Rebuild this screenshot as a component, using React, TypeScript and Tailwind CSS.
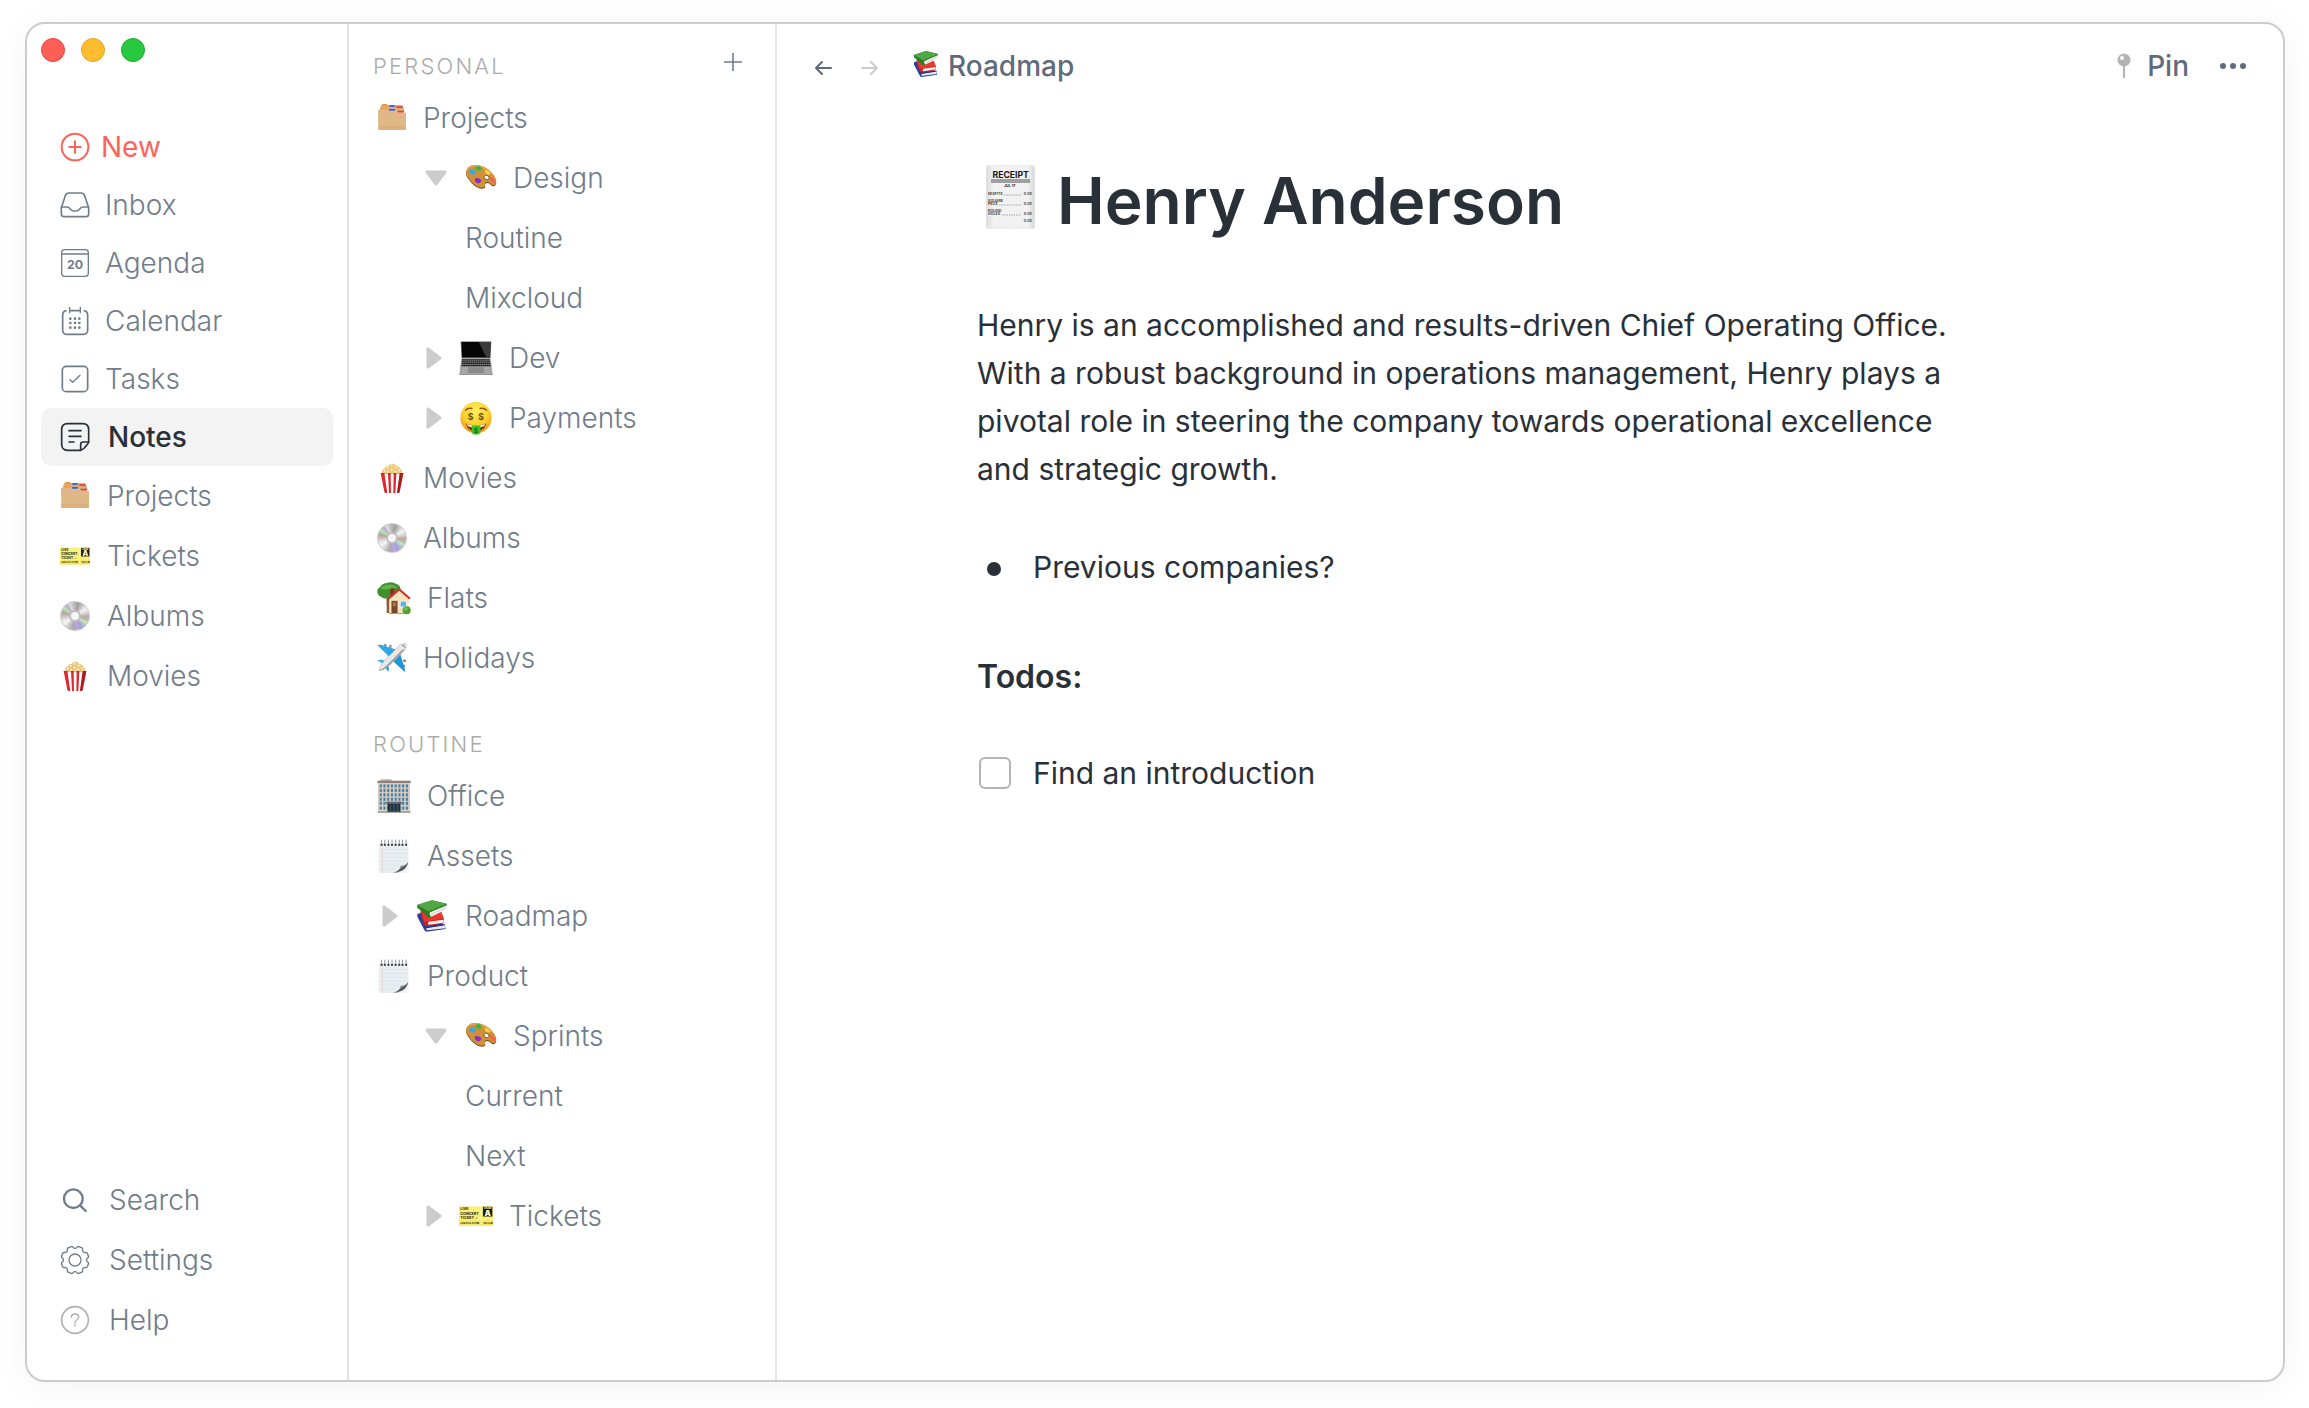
import type { ReactNode } from "react";

/* ---------- line icons ---------- */

function LineIcon({ children, className = "w-[30px] h-[30px]", sw = 5 }: { children: ReactNode; className?: string; sw?: number }) {
  return (
    <svg viewBox="0 0 90 90" className={`shrink-0 ${className}`} fill="none" stroke="currentColor" strokeWidth={sw} strokeLinecap="round" strokeLinejoin="round" aria-hidden="true">
      {children}
    </svg>
  );
}

const NewIcon = () => (
  <LineIcon sw={6}>
    <circle cx="45" cy="45" r="40" />
    <path d="M28 45H62M45 28V62" />
  </LineIcon>
);
const InboxIcon = () => (
  <LineIcon>
    <path d="M4 53L16 17Q19 9 27 9H63Q71 9 74 17L86 53V71Q86 80 77 80H13Q4 80 4 71Z" />
    <path d="M4 51H20Q27 51 30 56Q34 63 41 63H49Q56 63 60 56Q63 51 70 51H86" />
  </LineIcon>
);
const AgendaIcon = () => (
  <LineIcon sw={4}>
    <rect x="5" y="5" width="80" height="80" rx="9" />
    <path d="M5 18H85" />
    <text x="45" y="64" textAnchor="middle" fontSize="37" fontWeight="700" fill="currentColor" stroke="none" fontFamily="Inter, sans-serif">20</text>
  </LineIcon>
);
const CalendarIcon = () => (
  <LineIcon>
    <path d="M20 14Q8 15 8 28V72Q8 85 20 85H70Q83 85 83 72V28Q83 15 71 14M29 14H61" strokeLinecap="butt" />
    <path d="M29 4V20M61 4V20" strokeWidth="4" />
    {[38, 51, 65].map((y) =>
      [31, 45, 58].map((x) => <circle key={`${x}-${y}`} cx={x} cy={y} r="4" fill="currentColor" stroke="none" />)
    )}
  </LineIcon>
);
const TasksIcon = () => (
  <LineIcon>
    <rect x="7" y="7" width="76" height="76" rx="12" />
    <path d="M30 47L38 55L60 34" strokeWidth="4" />
  </LineIcon>
);
const NotesIcon = () => (
  <LineIcon>
    <path d="M61 85H23Q5 85 5 67V23Q5 5 23 5H68Q86 5 86 23V60Q84 66 79 71L73 78Q68 83 61 85Z" />
    <path d="M62 84V67Q62 60 69 60H86M27 26H63M27 43H63M27 60H42" />
  </LineIcon>
);
const SearchIcon = () => (
  <LineIcon sw={7}>
    <circle cx="40" cy="41" r="28" />
    <path d="M60 61L77 78" />
  </LineIcon>
);

const gearPath = (() => {
  const p = (deg: number, r: number) => {
    const a = (deg * Math.PI) / 180;
    return `${(45 + r * Math.sin(a)).toFixed(1)} ${(45 - r * Math.cos(a)).toFixed(1)}`;
  };
  let d = `M${p(0, 35)}`;
  for (let i = 0; i < 8; i++) {
    const a = i * 45;
    d += `Q${p(a + 8, 35)} ${p(a + 9, 39)}Q${p(a + 11, 42)} ${p(a + 16, 42)}L${p(a + 29, 42)}Q${p(a + 34, 42)} ${p(a + 36, 39)}Q${p(a + 37, 35)} ${p(a + 45, 35)}`;
  }
  return d + "Z";
})();
const SettingsIcon = () => (
  <LineIcon sw={4}>
    <path d={gearPath} />
    <circle cx="45" cy="45" r="18" />
  </LineIcon>
);
const HelpIcon = () => (
  <LineIcon className="w-[30px] h-[30px] text-[#b0b0b0]">
    <circle cx="45" cy="45" r="40" />
    <path d="M34 37Q34 27 45 27Q56 27 56 36Q56 42 50 45Q45 48 45 54" strokeWidth="4" />
    <circle cx="45" cy="61" r="3" fill="currentColor" stroke="none" />
  </LineIcon>
);

/* ---------- pictograms ---------- */

function Pic({ vb, className, children }: { vb: string; className: string; children: ReactNode }) {
  return (
    <svg viewBox={vb} className={`shrink-0 ${className}`} aria-hidden="true">
      {children}
    </svg>
  );
}

const Folders = () => (
  <Pic vb="-3 -3 90 90" className="w-[30px] h-[30px]">
    <path d="M4 22L10 4H72L80 22Z" fill="#c9985c" />
    <rect x="12" y="0" width="16" height="6" rx="2" fill="#f6923c" />
    <rect x="34" y="3" width="16" height="5" rx="1" fill="#3d5afe" />
    <rect x="56" y="7" width="19" height="5" rx="1" fill="#ef4444" />
    <path d="M8 7H32V10H54V13H78V22H6Z" fill="#d9b07d" />
    <rect x="9" y="11" width="19" height="6" rx="1" fill="#f39a4b" />
    <rect x="33" y="15" width="18" height="5" rx="1" fill="#3d5afe" />
    <rect x="58" y="20" width="20" height="6" rx="1" fill="#ef3b3b" />
    <path d="M0 20Q0 17 3 17H30L34 22H56L60 26H84V74Q84 78 80 78H4Q1 78 1 74Z" fill="#e0b887" />
    <path d="M1 66H84V74Q84 78 80 78H4Q1 78 1 74Z" fill="#dcb07b" />
  </Pic>
);

const Ticket = ({ className = "w-[30px] h-[30px]" }: { className?: string }) => (
  <Pic vb="0 -22 101 101" className={className}>
    <rect x="0" y="0" width="101" height="57" fill="#f9f07a" />
    <rect x="0" y="42" width="101" height="15" fill="#f5e766" />
    <path d="M66 0V57" stroke="#fffbd0" strokeWidth="3" strokeDasharray="4 4" />
    <g fontFamily="Inter, sans-serif" fontWeight="800" fill="#3a3918">
      <text x="4" y="12" fontSize="11">LIVE</text>
      <text x="4" y="25" fontSize="11">CONCERT</text>
      <text x="4" y="38" fontSize="11">TICKET ♫</text>
      <text x="4" y="53" fontSize="7">JAN 22 8.45 PM</text>
      <text x="72" y="53" fontSize="7">102 A.M</text>
    </g>
    <rect x="71" y="1" width="28" height="29" fill="#17170f" />
    <text x="85" y="9" fontSize="8" fontWeight="800" textAnchor="middle" fill="#f7ee6e" fontFamily="Inter, sans-serif">ZONE</text>
    <text x="85" y="28" fontSize="24" fontWeight="900" textAnchor="middle" fill="#fbf8d0" fontFamily="Inter, sans-serif">A</text>
  </Pic>
);

const Disc = () => (
  <span
    aria-hidden="true"
    className="flex w-[30px] h-[30px] shrink-0 items-center justify-center rounded-full border border-[#c9c9c9] bg-[conic-gradient(#b4b4b4_0deg,#9e9e9e_15deg,#c4c4c4_35deg,#f4f4f4_55deg,#d8d8d8_75deg,#c9a8a8_90deg,#b3b3b3_105deg,#c8e8a8_120deg,#a0c8e0_135deg,#b49ad8_150deg,#b8a8e0_170deg,#a8a8a8_190deg,#c8c8c8_210deg,#f6f6f6_235deg,#e0e0e0_255deg,#d8b4b4_272deg,#a8a8a8_285deg,#b8e8a0_305deg,#b8a8dc_322deg,#dcdcdc_335deg,#b4b4b4_360deg)]"
  >
    <span className="flex w-3 h-3 items-center justify-center rounded-full bg-[#bdbdbd]">
      <span className="w-2 h-2 rounded-full bg-[#f6f6f6]" />
    </span>
  </span>
);

const Popcorn = () => (
  <Pic vb="-11 0 90 90" className="w-[30px] h-[30px]">
    <path d="M3 30Q2 20 12 17Q14 9 24 9Q28 1 37 2Q45 2 47 9Q57 9 58 18Q66 21 65 31Z" fill="#f1d28b" />
    {[[12, 23], [22, 15], [33, 8], [45, 14], [55, 22], [33, 20], [22, 26], [44, 26]].map(([x, y]) => (
      <circle key={`${x}-${y}`} cx={x} cy={y} r="5" fill="#fbe9b7" stroke="#d9a950" strokeWidth="1.5" />
    ))}
    <path d="M0 30H68L57 86Q56 90 52 90H16Q12 90 11 86Z" fill="#e0282e" />
    <path d="M11 30H22L25 90H20ZM30 30H39L38 90H31ZM47 30H57L49 90H44Z" fill="#fff" />
    <path d="M58 30H68L57 86Q56 90 52 90H49Z" fill="#8f1116" opacity=".65" />
    <path d="M0 30H68L67 34H1Z" fill="#a3181c" opacity=".35" />
  </Pic>
);

const Palette = () => (
  <Pic vb="-2 -8 95 95" className="w-8 h-8">
    <path d="M2 21C4 9 16 3 32 4C52 5 72 17 84 35C92 47 93 57 86 63C80 67 76 61 70 56C64 52 56 55 57 61C58 66 60 69 53 71C40 74 22 63 10 45C3 36 0 29 2 21Z" fill="#6e4a17" />
    <path d="M2 18C4 6 16 0 32 1C52 2 72 14 84 32C92 44 93 54 86 60C80 64 76 58 70 53C64 49 56 52 57 58C58 63 60 66 53 68C40 71 22 60 10 42C3 33 0 26 2 18Z" fill="#d18f38" />
    <path d="M4 17C7 7 18 3 32 4C48 5 64 14 76 27" fill="none" stroke="#e6b15c" strokeWidth="3" />
    <ellipse cx="62" cy="38" rx="8" ry="6" fill="#fff" stroke="#5b3b10" strokeWidth="2" transform="rotate(25 62 38)" />
    <path d="M10 18Q16 12 23 15Q31 17 31 24Q30 30 22 29Q14 30 11 24Z" fill="#37a9e8" />
    <path d="M29 9Q34 3 41 4Q49 8 48 14Q43 20 36 17Q29 15 29 9Z" fill="#36b83a" />
    <path d="M57 15L67 18Q74 23 72 28Q66 31 60 27Q56 21 57 15Z" fill="#f6d53a" />
    <path d="M73 37Q80 38 87 46Q90 53 84 54Q75 50 72 43Z" fill="#f4614f" />
    <path d="M27 42Q33 37 39 41Q47 43 46 50Q42 57 35 55Q26 52 27 42Z" fill="#8a2fc4" />
  </Pic>
);

const Laptop = () => (
  <Pic vb="-1 0 101 101" className="w-[34px] h-[34px]">
    <path d="M4 1H95L93 52H6Z" fill="#8e8e8e" />
    <path d="M6 3H93L91 49H8Z" fill="#050505" />
    <path d="M58 3H93L91 49H80Z" fill="#3b3b3b" />
    <path d="M6 52H93L99 97H0Z" fill="#a6a6a6" />
    <path d="M0 97H99V100H0Z" fill="#6f6f6f" />
    <path d="M8 53H91L94 75H5Z" fill="#858585" />
    <path d="M9 56H90M8 62H91M8 67H92M7 73H93" stroke="#161616" strokeWidth="4" strokeDasharray="5 1.2" />
    <path d="M27 78H72L75 95H24Z" fill="#8b8b8b" />
  </Pic>
);

const MoneyFace = () => (
  <Pic vb="-3 -2 100 100" className="w-[34px] h-[34px]">
    <defs>
      <radialGradient id="face" cx=".5" cy=".3" r=".75">
        <stop offset="0" stopColor="#fff25a" />
        <stop offset=".55" stopColor="#ffd02e" />
        <stop offset="1" stopColor="#ee8a12" />
      </radialGradient>
    </defs>
    <circle cx="47" cy="47" r="46" fill="url(#face)" />
    <path d="M16 25Q24 17 35 20M59 20Q70 17 78 25" fill="none" stroke="#8a5a10" strokeWidth="4" strokeLinecap="round" />
    <g fontFamily="Inter, sans-serif" fontWeight="700" fontSize="27" fill="#6b5c12" textAnchor="middle">
      <text x="31" y="54">$</text>
      <text x="62" y="54">$</text>
    </g>
    <path d="M17 64Q47 76 77 64Q72 87 47 88Q22 87 17 64Z" fill="#7a3a0c" />
    <path d="M20 66Q47 76 74 66L71 72Q47 80 23 72Z" fill="#fff6d8" />
    <path d="M35 71H60V89Q60 97 47 97Q35 97 35 89Z" fill="#3fc32a" />
    <text x="47" y="92" fontFamily="Inter, sans-serif" fontWeight="700" fontSize="20" fill="#12640f" textAnchor="middle">$</text>
  </Pic>
);

const House = () => (
  <Pic vb="0 -3 101 101" className="w-[34px] h-[34px]">
    <path d="M28 38H39V92H29Z" fill="#8a5a33" />
    <path d="M1 30Q0 20 9 15Q16 3 32 2Q46-2 56 5Q68 8 70 20Q72 34 60 40Q48 48 34 46Q24 52 14 45Q2 42 1 30Z" fill="#3f8f2f" />
    <path d="M10 18Q20 8 34 8Q50 6 60 16Q48 22 34 20Q20 26 10 18Z" fill="#62b345" />
    <rect x="40" y="19" width="11" height="20" fill="#8c2a21" />
    <path d="M36 50L65 22L94 50V92H36Z" fill="#f4e3bd" />
    <path d="M34 50L66 22L98 50" fill="none" stroke="#d0312d" strokeWidth="6" />
    <rect x="43" y="56" width="18" height="36" fill="#7c4426" />
    <rect x="47" y="60" width="9" height="12" fill="#a9774f" />
    <rect x="68" y="56" width="20" height="19" fill="#fff" />
    <rect x="70" y="58" width="16" height="15" fill="#62aee6" />
    <path d="M36 92H94V95H36Z" fill="#a8998a" />
    <circle cx="88" cy="84" r="12" fill="#4f9e34" />
    <circle cx="85" cy="80" r="6" fill="#76bf4b" />
  </Pic>
);

const Plane = () => (
  <Pic vb="0 -1 91 91" className="w-[30px] h-[30px]">
    <path d="M22 1L29 3L28 11L21 9ZM38 4L45 6L43 15L36 13Z" fill="#8d8d8d" />
    <path d="M80 48L89 50L88 57L79 57ZM77 64L86 66L84 73L76 72Z" fill="#8d8d8d" />
    <path d="M1 5L12 4L62 20L42 46Z" fill="#2fa6e6" />
    <path d="M85 88L84 76L70 30L44 50Z" fill="#2196d8" />
    <path d="M1 52L10 49L30 54L22 64Z" fill="#3db1ee" />
    <path d="M34 87L36 78L34 62L24 70Z" fill="#2196d8" />
    <path d="M88 1Q93 8 84 20L34 70Q20 82 6 83Q8 68 20 56L68 6Q80-2 88 1Z" fill="#e9e9e9" stroke="#a5a5a5" strokeWidth="1.5" />
    <path d="M84 20L34 70Q20 82 6 83Q20 76 30 66L78 18Z" fill="#a2a2a2" />
    <path d="M76 6Q83 6 85 13" fill="none" stroke="#6d6d6d" strokeWidth="3" />
  </Pic>
);

const Office = () => (
  <Pic vb="-1 -1 100 100" className="w-[34px] h-[34px]">
    <rect x="10" y="0" width="32" height="5" fill="#b9ada3" />
    <rect x="0" y="4" width="98" height="7" fill="#8f8078" />
    <rect x="2" y="11" width="94" height="85" fill="#d5cbc3" />
    {[15, 28, 41, 54, 66, 80].map((y) =>
      [7, 18, 29, 40, 51, 62, 73, 84].map((x) => <rect key={`${x}-${y}`} x={x} y={y} width="6" height="9" fill="#4580a3" />)
    )}
    <rect x="26" y="66" width="46" height="6" fill="#6a625e" />
    <rect x="30" y="72" width="38" height="24" fill="#1f3442" />
    <path d="M39 74V96M49 74V96M59 74V96" stroke="#53707f" strokeWidth="2" />
    <rect x="1" y="95" width="97" height="3" fill="#777" />
  </Pic>
);

const Notepad = () => (
  <Pic vb="-6 -1 104 104" className="w-[34px] h-[34px]">
    <rect x="0" y="12" width="90" height="91" fill="#e9eef1" />
    <path d="M0 31H90M0 43H90M0 55H90M0 67H78M0 79H60M0 91H50" stroke="#d3e3ec" strokeWidth="2" />
    <path d="M11 22V103" stroke="#efc9c9" strokeWidth="1.5" />
    {[8, 18, 29, 40, 51, 62, 72, 83].map((x) => (
      <g key={x}>
        <path d={`M${x} 1V14`} stroke="#8a97a3" strokeWidth="3" />
        <circle cx={x} cy="17" r="3.5" fill="#3f3f42" />
      </g>
    ))}
    <path d="M42 103Q62 96 68 82Q80 84 90 66V103Z" fill="#f4f5f6" />
    <path d="M42 103Q64 96 67 80Q80 83 90 68Q88 86 72 95Q58 103 42 103Z" fill="#8a8d90" />
    <path d="M46 102Q66 94 70 86Q82 84 89 71Q84 88 70 95Z" fill="#4f5254" />
  </Pic>
);

const Books = ({ className = "w-[34px] h-[34px]" }: { className?: string }) => (
  <Pic vb="-6 -4 100 100" className={className}>
    <path d="M1 40L20 34L82 74L84 84L28 92Q22 90 20 84L1 48Z" fill="#2b3f9e" />
    <path d="M28 81L82 72L82 82L30 88Q26 86 28 81Z" fill="#ececf0" />
    <path d="M20 78L80 70L84 73L26 82Z" fill="#24368c" />
    <path d="M11 30L70 32L79 54L78 68L28 76Q21 74 19 66L10 38Z" fill="#d0231f" />
    <path d="M11 30L70 32L79 54L22 62Z" fill="#e63a31" />
    <path d="M34 63L78 57L78 66L34 72Q30 68 34 63Z" fill="#f6f1ee" />
    <path d="M36 36L87 14L86 27L40 49Q34 44 36 36Z" fill="#f1f1ee" />
    <path d="M38 43L86 21" stroke="#b7b7b2" strokeWidth="1.5" />
    <path d="M0 14L44 0L87 10Q89 13 86 15L38 35Q34 42 42 49L36 51Q30 50 27 44L1 22Z" fill="#2c7d28" />
    <path d="M0 14L44 0L87 10L34 33Z" fill="#4fa843" />
  </Pic>
);

const Receipt = () => (
  <Pic vb="0 0 147 190" className="w-[49px] h-16">
    <defs>
      <linearGradient id="paper" x1="0" x2="1">
        <stop offset="0" stopColor="#dcdcdc" />
        <stop offset=".15" stopColor="#f2f2f2" />
        <stop offset=".85" stopColor="#f2f2f2" />
        <stop offset="1" stopColor="#d8d8d8" />
      </linearGradient>
    </defs>
    <rect x="1" y="1" width="145" height="188" rx="5" fill="url(#paper)" stroke="#d6d6d6" strokeWidth="2" strokeDasharray="6 3" />
    <g fontFamily="Inter, sans-serif" fill="#161616">
      <text x="74" y="37" fontSize="26" fontWeight="700" textAnchor="middle">RECEIPT</text>
      <text x="71" y="64" fontSize="11" fontWeight="700" textAnchor="middle">JUL 17</text>
      <g fontSize="11" fontWeight="600" fill="#3c3c3c">
        <text x="6" y="90">MISFITS</text>
        <text x="6" y="109">SQUARE</text>
        <text x="6" y="120">PEGS</text>
        <text x="6" y="139">ROUND</text>
        <text x="6" y="150">HOLES</text>
        <text x="138" y="90" textAnchor="end">0.00</text>
        <text x="138" y="120" textAnchor="end">0.00</text>
        <text x="138" y="150" textAnchor="end">0.00</text>
        <text x="138" y="171" textAnchor="end">0.00</text>
      </g>
    </g>
    <path d="M15 44H132M15 50H132" stroke="#2c2c2c" strokeWidth="2.5" />
    <path d="M54 89H106M40 119H106M48 149H106" stroke="#777" strokeWidth="2" strokeDasharray="4 3" />
  </Pic>
);

/* ---------- sidebar ---------- */

function NavRow({ icon, label, className }: { icon: ReactNode; label: string; className: string }) {
  return (
    <li>
      <a href="#" className={`flex items-center rounded-[10px] pl-[19px] ${className}`}>
        {icon}
        <span>{label}</span>
      </a>
    </li>
  );
}

function Sidebar() {
  return (
    <aside className="flex w-[322px] shrink-0 flex-col border-r-2 border-[#e5e5e5] px-3.5 pt-3.5 pb-[30px]">
      <div className="flex gap-4">
        <button aria-label="Close" className="w-6 h-6 rounded-full border border-[#e2463f] bg-[#ff5f57]" />
        <button aria-label="Minimize" className="w-6 h-6 rounded-full border border-[#e1a32c] bg-[#febc2e]" />
        <button aria-label="Zoom" className="w-6 h-6 rounded-full border border-[#1dad2b] bg-[#28c840]" />
      </div>
      <nav className="mt-14">
        <ul>
          <NavRow icon={<NewIcon />} label="New" className="h-[58px] gap-[11px] font-normal text-[#ff6259]" />
          <NavRow icon={<InboxIcon />} label="Inbox" className="h-[58px] gap-[15px]" />
          <NavRow icon={<AgendaIcon />} label="Agenda" className="h-[58px] gap-[15px]" />
          <NavRow icon={<CalendarIcon />} label="Calendar" className="h-[58px] gap-[15px]" />
          <NavRow icon={<TasksIcon />} label="Tasks" className="h-[58px] gap-[15px]" />
          <NavRow icon={<NotesIcon />} label="Notes" className="h-[58px] gap-[18px] bg-[#f3f3f3] font-medium text-[#293038]" />
          <NavRow icon={<Folders />} label="Projects" className="h-[60px] gap-[17px]" />
          <NavRow icon={<Ticket />} label="Tickets" className="h-[60px] gap-[17px]" />
          <NavRow icon={<Disc />} label="Albums" className="h-[60px] gap-[17px]" />
          <NavRow icon={<Popcorn />} label="Movies" className="h-[60px] gap-[17px]" />
        </ul>
      </nav>
      <ul className="mt-auto">
        <NavRow icon={<SearchIcon />} label="Search" className="h-[60px] gap-[19px]" />
        <NavRow icon={<SettingsIcon />} label="Settings" className="h-[60px] gap-[19px]" />
        <NavRow icon={<HelpIcon />} label="Help" className="h-[60px] gap-[19px]" />
      </ul>
    </aside>
  );
}

/* ---------- page tree ---------- */

type Row = { label: string; icon?: ReactNode; toggle?: "open" | "closed"; indent?: string };

const personal: Row[] = [
  { label: "Projects", icon: <Folders /> },
  { label: "Design", icon: <Palette />, toggle: "open", indent: "pl-12" },
  { label: "Routine", indent: "pl-[88px]" },
  { label: "Mixcloud", indent: "pl-[88px]" },
  { label: "Dev", icon: <Laptop />, toggle: "closed", indent: "pl-12" },
  { label: "Payments", icon: <MoneyFace />, toggle: "closed", indent: "pl-12" },
  { label: "Movies", icon: <Popcorn /> },
  { label: "Albums", icon: <Disc /> },
  { label: "Flats", icon: <House /> },
  { label: "Holidays", icon: <Plane /> },
];

const routine: Row[] = [
  { label: "Office", icon: <Office /> },
  { label: "Assets", icon: <Notepad /> },
  { label: "Roadmap", icon: <Books />, toggle: "closed", indent: "pl-1" },
  { label: "Product", icon: <Notepad /> },
  { label: "Sprints", icon: <Palette />, toggle: "open", indent: "pl-12" },
  { label: "Current", indent: "pl-[88px]" },
  { label: "Next", indent: "pl-[88px]" },
  { label: "Tickets", icon: <Ticket className="w-[34px] h-[34px]" />, toggle: "closed", indent: "pl-12" },
];

function TreeRow({ label, icon, toggle, indent = "" }: Row) {
  return (
    <li className={`flex h-[60px] items-center ${indent}`}>
      {toggle === "open" && (
        <button aria-label={`Collapse ${label}`} aria-expanded="true" className="mr-[18px]">
          <svg viewBox="0 0 22 16" className="w-[22px] h-4 text-[#cccccc]" fill="currentColor" stroke="currentColor" strokeWidth="3" strokeLinejoin="round" aria-hidden="true">
            <path d="M2 2H20L11 14Z" />
          </svg>
        </button>
      )}
      {toggle === "closed" && (
        <button aria-label={`Expand ${label}`} aria-expanded="false" className="mr-[17px]">
          <svg viewBox="0 0 17 22" className="w-[17px] h-[22px] text-[#cccccc]" fill="currentColor" stroke="currentColor" strokeWidth="3" strokeLinejoin="round" aria-hidden="true">
            <path d="M3 2V20L15 11Z" />
          </svg>
        </button>
      )}
      <a href="#" className="flex items-center gap-4">
        {icon}
        <span>{label}</span>
      </a>
    </li>
  );
}

function TreeSection({ title, rows, action }: { title: string; rows: Row[]; action?: ReactNode }) {
  return (
    <section>
      <div className="flex h-11 items-center justify-between pl-6 pr-6">
        <h2 className="text-[22px] tracking-widest text-[#ababab]">{title}</h2>
        {action}
      </div>
      <ul className="pl-7">
        {rows.map((row) => (
          <TreeRow key={row.label} {...row} />
        ))}
      </ul>
    </section>
  );
}

function Tree() {
  return (
    <nav className="flex w-[428px] shrink-0 flex-col gap-[34px] border-r-2 border-[#e5e5e5] pt-5">
      <TreeSection
        title="PERSONAL"
        rows={personal}
        action={
          <button aria-label="Add page" className="flex w-9 h-9 items-center justify-center self-start">
            <svg viewBox="0 0 18 18" className="w-[18px] h-[18px]" stroke="currentColor" strokeWidth="1.6" aria-hidden="true">
              <path d="M9 0V18M0 9H18" />
            </svg>
          </button>
        }
      />
      <TreeSection title="ROUTINE" rows={routine} />
    </nav>
  );
}

/* ---------- document ---------- */

function Toolbar() {
  return (
    <header className="flex h-[84px] shrink-0 items-center pl-[37px] pr-9 font-medium text-[#5f6b7a]">
      <button aria-label="Back" className="mt-1">
        <svg viewBox="0 0 18 16" className="w-[18px] h-4" fill="none" stroke="currentColor" strokeWidth="2" strokeLinecap="round" strokeLinejoin="round" aria-hidden="true">
          <path d="M8 2L2 8L8 14M2 8H17" />
        </svg>
      </button>
      <button aria-label="Forward" className="mt-1 ml-[29px] text-[#cccccc]">
        <svg viewBox="0 0 18 16" className="w-[18px] h-4" fill="none" stroke="currentColor" strokeWidth="2" strokeLinecap="round" strokeLinejoin="round" aria-hidden="true">
          <path d="M10 2L16 8L10 14M16 8H1" />
        </svg>
      </button>
      <a href="#" className="ml-[33px] flex items-center gap-2">
        <Books className="mb-1 w-7 h-7" />
        <span>Roadmap</span>
      </a>
      <button className="ml-auto flex items-center gap-4">
        <svg viewBox="0 0 14 26" className="w-3.5 h-[26px] text-[#b3b3b3]" aria-hidden="true">
          <path d="M7 12V25" stroke="currentColor" strokeWidth="2" />
          <circle cx="7" cy="7" r="6.5" fill="currentColor" />
          <circle cx="5" cy="5" r="2" fill="#fff" />
        </svg>
        <span>Pin</span>
      </button>
      <button aria-label="More" className="ml-[30px]">
        <svg viewBox="0 0 28 8" className="w-7 h-2" fill="currentColor" aria-hidden="true">
          <circle cx="4" cy="4" r="3" />
          <circle cx="14" cy="4" r="3" />
          <circle cx="24" cy="4" r="3" />
        </svg>
      </button>
    </header>
  );
}

function Document() {
  return (
    <main className="flex min-w-0 flex-1 flex-col">
      <Toolbar />
      <article className="max-w-[1210px] pl-[200px] pt-[53px] text-[30px] font-normal leading-[48px] text-[#293038]">
        <h1 className="flex items-center gap-[22px] pl-[9px] text-[64px] leading-[80px] font-semibold">
          <span className="mb-2 flex">
            <Receipt />
          </span>
          Henry Anderson
        </h1>
        <p className="mt-[60px]">
          Henry is an accomplished and results-driven Chief Operating Office. With a robust background in operations management, Henry plays a pivotal role in steering the company towards operational excellence and strategic growth.
        </p>
        <ul className="mt-[50px]">
          <li className="flex items-center pl-2.5">
            <span className="mt-1 mr-8 h-3.5 w-3.5 rounded-full bg-[#293038]" />
            Previous companies?
          </li>
        </ul>
        <h2 className="mt-[62px] text-[32px] font-semibold">Todos:</h2>
        <label className="mt-12 flex items-center gap-[22px] pl-0.5">
          <input type="checkbox" className="w-8 h-8 appearance-none rounded-md border-2 border-[#b3b3b3] bg-white" />
          Find an introduction
        </label>
      </article>
    </main>
  );
}

export default function App() {
  return (
    <div className="flex min-h-screen bg-white pt-[22px] pr-6 pb-[26px] pl-[25px] font-['Inter',sans-serif] text-[28px] font-light leading-9 text-[#717c8a]">
      <div className="flex flex-1 overflow-hidden rounded-[20px] border-2 border-[#cccccc] bg-white shadow-[0_4px_32px_rgba(0,0,0,0.05)]">
        <Sidebar />
        <Tree />
        <Document />
      </div>
    </div>
  );
}
